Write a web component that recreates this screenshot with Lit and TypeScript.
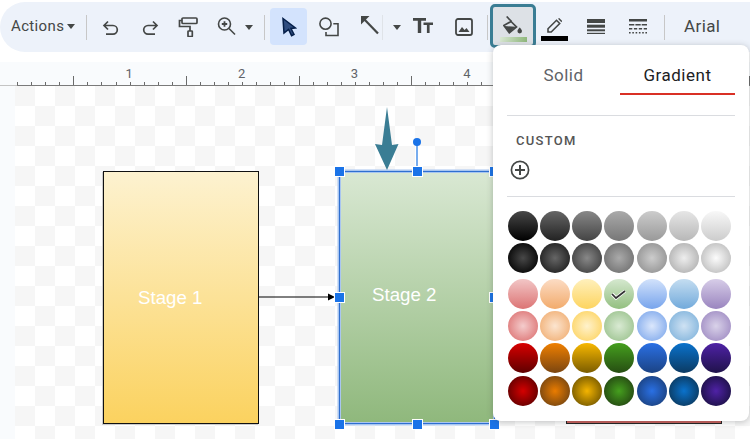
import { LitElement, html, css, svg } from "lit";
import { customElement } from "lit/decorators.js";

const LIN: [string, string][][] = [
  [["#484848","#000000"],["#666666","#222222"],["#888888","#444444"],["#aaaaaa","#777777"],["#cccccc","#999999"],["#e6e6e6","#b7b7b7"],["#f8f8f8","#cccccc"]],
  [["#f2c6c6","#dc7474"],["#fcdcc4","#f2ab6c"],["#fff0bc","#fdd45f"],["#d5e8cf","#93bf80"],["#d2e2fb","#77a4ec"],["#c4ddf1","#72aadb"],["#d7cde8","#9a85bf"]],
  [["#d80000","#5e0000"],["#f08000","#7a4510"],["#f8b800","#7a5c00"],["#459f1e","#264d12"],["#2a70e4","#1b4384"],["#0a72cc","#0b3a62"],["#4f22a6","#1f124a"]],
];
const RAD: [string, string][][] = [
  [["#484848","#0a0a0a"],["#666666","#262626"],["#888888","#484848"],["#aaaaaa","#777777"],["#cccccc","#999999"],["#eeeeee","#b7b7b7"],["#fcfcfc","#c4c4c4"]],
  [["#f4cccc","#e08080"],["#fce5d0","#f2b680"],["#fff2cc","#fdd871"],["#d9ead3","#a4c898"],["#dbe7fc","#8db2ee"],["#cfe2f3","#8cbadf"],["#d9d2e9","#a795c8"]],
  [["#d40000","#6a0000"],["#ea7c00","#7f4a10"],["#f4b400","#7f6000"],["#459f1e","#274e13"],["#2a70e4","#1c4587"],["#0a72cc","#0b3d66"],["#4f22a6","#20124d"]],
];

const HANDLES = [[324.5,85.5],[402,85.5],[479.5,85.5],[324.5,211],[479.5,211],[324.5,338],[402,338],[479.5,338]];

@customElement("app-root")
export class AppRoot extends LitElement {
  static styles = css`
    :host { display: block; width: 750px; height: 439px; overflow: hidden; background: #fff; position: relative; font-family: Roboto, "Liberation Sans", sans-serif; color: #444746; }
    .toolbar { box-sizing: border-box; margin-top: 2px; height: 50px; width: 750px; background: #edf2fa; border-radius: 25px 0 0 25px; display: flex; align-items: center; padding-left: 11px; }
    .toolbar > * { flex: none; }
    .actions { font-size: 15px; letter-spacing: .35px; width: 52px; margin-bottom: 2px; white-space: nowrap; }
    .caret { width: 0; height: 0; border: 4.5px solid transparent; border-top: 5px solid #444746; border-bottom: 0; }
    .c1 { margin: 0 0 2px 4px; }
    .c2 { margin-left: 8.5px; }
    .c3 { margin-left: 9.5px; }
    .sep { width: 1px; height: 25px; background: #c7c7c7; }
    .s1b { margin-left: 11px; }
    .s2b { margin-left: 11.5px; }
    .s3b { margin-left: 3.5px; background: #dfe3e8; }
    .s4b { margin-left: 14px; }
    .s5b { margin-left: 17px; }
    .undo { margin-left: 15px; }
    .redo { margin-left: 21px; }
    .roller { margin-left: 19px; }
    .zoom { margin: 0 0 2px 18px; }
    .sel { margin-left: 5px; margin-bottom: 1px; width: 37px; height: 37px; border-radius: 4px; background: #d3e3fd; display: flex; align-items: center; justify-content: center; }
    .shp { margin: 0 0 1px 11px; }
    .ln { margin: 0 0 4px 19.5px; }
    .tt { margin: 0 0 3px 12.5px; }
    .img { margin-left: 22px; }
    .fill { margin: 0 0 3px 2px; box-sizing: border-box; width: 46px; height: 44px; border: 3px solid #3a7d94; border-radius: 5px; background: #dde1e6; display: flex; flex-direction: column; align-items: center; padding-top: 9px; }
    .fillbar { width: 27px; height: 5px; margin-top: 3px; background: linear-gradient(90deg, #d9e8d3, #8fb87c); }
    .pen { margin: 5px 0 0 5px; width: 27px; display: flex; flex-direction: column; align-items: center; }
    .penbar { width: 27px; height: 5px; margin-top: 3px; background: #000; }
    .weight { margin-left: 19px; }
    .dash { margin-left: 24px; }
    .arial { margin: 0 0 2px 19px; font-size: 17px; letter-spacing: .4px; }
    .rulerwrap { margin-top: 10px; height: 377px; background: #f9fbfd; }
    .ruler { display: block; }
    .canvas { position: absolute; left: 15px; top: 86px; width: 735px; height: 353px; background-color: #fff; background-image: conic-gradient(#fff 25%, #f6f6f6 0 50%, #fff 0 75%, #f6f6f6 0); background-size: 40px 40px; }
    .shape { position: absolute; box-sizing: border-box; color: #fff; font: 18.7px "Liberation Sans", sans-serif; }
    .st1 { left: 88px; top: 85px; width: 156px; height: 253px; border: 1px solid #111; background: linear-gradient(#fdf2d0, #fbd25f); box-shadow: -1px 1px 0 #ccc; }
    .st2 { left: 324px; top: 85px; width: 156px; height: 253px; border: 1px solid #2f6fd0; background: linear-gradient(#d9e8d3, #8fb87c); box-shadow: 0 0 0 1.5px #a9c6f0, inset 0 0 0 1px #a9c6f0; }
    .st3 { left: 551px; top: 300px; width: 156px; height: 38px; border: 1px solid #222; background: #c9605c; }
    .label { position: absolute; white-space: nowrap; }
    .l1 { left: 34px; top: 115px; }
    .l2 { left: 32px; top: 112px; }
    .over { position: absolute; left: 0; top: 0; overflow: visible; }
    .h { position: absolute; box-sizing: border-box; width: 11px; height: 11px; background: #1a73e8; border: 1px solid #fff; margin: -5.5px 0 0 -5.5px; }
    .pop { position: absolute; left: 493px; top: 45px; box-sizing: border-box; width: 256px; height: 376px; background: #fff; border-radius: 8px; box-shadow: 0 1px 6px rgba(60,64,67,.3); padding: 0 14px; }
    .tabs { display: grid; grid-template-columns: 113px 115px; height: 50px; }
    .tab { box-sizing: border-box; height: 50px; padding-top: 10px; display: flex; align-items: center; justify-content: center; font-size: 17px; letter-spacing: .5px; color: #5f6368; }
    .tab.on { color: #202124; border-bottom: 2px solid #d93025; padding-top: 12px; }
    .div { height: 1px; background: #dadce0; width: 228px; }
    .d1 { margin-top: 20px; }
    .custom { font-size: 13px; font-weight: 500; letter-spacing: 1.3px; color: #555; margin: 17px 0 0 9px; line-height: 15px; }
    .plus { display: block; margin: 12px 0 16px 3px; }
    .grid { display: grid; grid-template-columns: repeat(7, 32.17px); grid-auto-rows: 32.2px; margin-top: 13px; }
    .grid.g2 { margin-top: 3.6px; }
    .sw { width: 30px; height: 30px; border-radius: 50%; margin: 1px; display: flex; align-items: center; justify-content: center; }
  `;

  ruler() {
    const t = [];
    const inch = 112.6, x0 = 17;
    for (let i = 0; i < 53; i++) {
      const x = Math.round(x0 + (i * inch) / 8) + 0.5;
      if (x > 750) break;
      const h = i % 8 === 4 ? 9 : 3;
      t.push(svg`<line x1=${x} x2=${x} y1=${23 - h} y2="23" stroke="#6b6b6b"/>`);
    }
    const n = [1, 2, 3, 4].map(v => svg`<text x=${x0 + v * inch - 0.5} y="15.500" text-anchor="middle" font-family="Roboto, sans-serif" font-size="13" fill="#5f6368">${v}</text>`);
    return html`<svg class="ruler" viewBox="0 0 750 24" width="750" height="24">${t}${n}
      <line x1="0" x2="17" y1="23.500" y2="23.500" stroke="#c4c4c4"/>
      <line x1="17" x2="750" y1="23.500" y2="23.500" stroke="#7a7a7a"/></svg>`;
  }

  swatches(rows: [string, string][][], kind: string, i: number) {
    return rows[i].map(([a, b], j) => {
      const g = kind === "l" ? `linear-gradient(${a}, ${b})` : `radial-gradient(circle closest-side, ${a}, ${b} 105%)`;
      const check = i === 1 && kind === "l" && j === 3;
      return html`<div class="sw" style="background:${g}">${check
        ? html`<svg width="18" height="16" viewBox="0 0 18 16" fill="none"><path d="M2 8l4 4 9-7" stroke="#fff" stroke-width="3.400"/><path d="M2 8l4 4 9-7" stroke="#333" stroke-width="1.700"/></svg>`
        : ""}</div>`;
    });
  }

  render() {
    const s = "#444746";
    return html`
      <div class="toolbar">
        <span class="actions">Actions</span>
        <span class="caret c1"></span>
        <span class="sep s1b"></span>
        <svg class="undo" width="18" height="18" viewBox="0 0 18 18" fill="none" stroke=${s} stroke-width="1.700"><path d="M6 3.500L2 7.500l4 4M2 7.500h9a4.300 4.300 0 0 1 0 8.600H4"/></svg>
        <svg class="redo" width="18" height="18" viewBox="0 0 18 18" fill="none" stroke=${s} stroke-width="1.700"><path d="M12 3.500l4 4-4 4M16 7.500H7a4.300 4.300 0 0 0 0 8.600h7"/></svg>
        <svg class="roller" width="20" height="20" viewBox="0 0 20 20" fill="none" stroke=${s} stroke-width="1.700"><rect x="4" y="1" width="15" height="5.500" rx="1"/><path d="M4 3.500H1.500V9.500H12V14"/><rect x="10" y="14" width="4.300" height="5.500" rx=".6"/></svg>
        <svg class="zoom" width="20" height="20" viewBox="0 0 20 20" fill="none" stroke=${s} stroke-width="1.600"><circle cx="8.500" cy="8" r="6"/><path d="M13 12.500l6 6"/><path d="M5.800 8h5.400M8.500 5.300v5.400" stroke-width="1.800"/></svg>
        <span class="caret c2"></span>
        <span class="sep s2b"></span>
        <span class="sel"><svg width="16" height="21" viewBox="0 0 16 21"><path d="M2 2.500L14.500 12l-4.500.5 3 6-2.400 1.200-3-6.200-4.600 3.500z" fill="#2f4d80" stroke="#041e49" stroke-width="1.500"/></svg></span>
        <svg class="shp" width="21" height="21" viewBox="0 0 21 21" fill="none" stroke=${s} stroke-width="1.600"><circle cx="7.500" cy="7.700" r="5.600"/><path d="M15.300 7.700H20V19.500H8V16"/></svg>
        <svg class="ln" width="20" height="20" viewBox="0 0 20 20"><path d="M2 1h8.500L2 9.500z" fill=${s}/><path d="M4 3L19 18.500" stroke=${s} stroke-width="2.200" fill="none"/></svg>
        <span class="sep s3b"></span>
        <span class="caret c3"></span>
        <svg class="tt" width="20" height="15" viewBox="0 0 20 15" fill=${s}><path d="M0 0h13v2.800H8.200V15H4.800V2.800H0zM10.500 4.500H20v2.400h-3.400V15h-2.700V6.900h-3.400z"/></svg>
        <svg class="img" width="18" height="18" viewBox="0 0 18 18"><rect x="1" y="1" width="16" height="16" rx="2" fill="none" stroke=${s} stroke-width="1.800"/><path d="M3.500 14l3.500-5 2.600 3 1.900-2 3 4z" fill=${s}/></svg>
        <span class="sep s4b"></span>
        <span class="fill">
          <svg width="20" height="18" viewBox="0 0 20 18"><path d="M8 5.500L13.500 11 6.300 16.800.8 9.500z" fill="none" stroke=${s} stroke-width="1.700"/><path d="M1.500 10L13 10.800 6.300 16.500z" fill=${s}/><path d="M3.700.5L8.500 5.500" stroke=${s} stroke-width="1.700"/><path d="M16.700 11.500s2.300 2.200 2.300 3.600a2.300 2.300 0 0 1-4.600 0c0-1.400 2.300-3.600 2.300-3.600z" fill=${s}/></svg>
          <span class="fillbar"></span>
        </span>
        <span class="pen">
          <svg width="15" height="15" viewBox="0 0 15 15"><path d="M1 14V10.800L9.500 2.300l3.200 3.200L4.200 14z" fill="none" stroke=${s} stroke-width="1.600"/><path d="M11 .8l1.200-.8 3 3-.8 1.200z" fill=${s}/></svg>
          <span class="penbar"></span>
        </span>
        <svg class="weight" width="18" height="16" viewBox="0 0 18 16" fill=${s}><rect width="18" height="4"/><rect y="5.700" width="18" height="3"/><rect y="10.300" width="18" height="2"/><rect y="13.800" width="18" height="1.200"/></svg>
        <svg class="dash" width="18" height="16" viewBox="0 0 18 16" fill=${s}><rect width="18" height="2.500"/><path d="M0 5h5.300v1.500H0zM6.400 5h5.300v1.500H6.400zM12.700 5H18v1.500h-5.300zM0 9h3.300v1.500H0zM4.900 9h3.300v1.500H4.900zM9.800 9h3.300v1.500H9.800zM14.700 9H18v1.500h-3.300zM0 13h1.600v1.500H0zM3.300 13h1.600v1.500H3.300zM6.600 13h1.600v1.500H6.600zM9.900 13h1.600v1.500H9.900zM13.200 13h1.600v1.500h-1.600zM16.400 13H18v1.500h-1.600z"/></svg>
        <span class="sep s5b"></span>
        <span class="arial">Arial</span>
      </div>
      <div class="rulerwrap">${this.ruler()}</div>
      <div class="canvas">
        <div class="shape st1"><span class="label l1">Stage 1</span></div>
        <div class="shape st2"><span class="label l2">Stage 2</span></div>
        <div class="shape st3"></div>
        <svg class="over" width="735" height="353" viewBox="15 86 735 353">
          <line x1="259" x2="332" y1="297" y2="297" stroke="#000" stroke-width="1"/>
          <path d="M328 293.500l7 3.500-7 3.500z" fill="#000"/>
          <path d="M387 107l5 38 6.500-1L387 170l-12-26 7 1z" fill="#3a7d94"/>
          <line x1="417" x2="417" y1="142" y2="171" stroke="#4a90e8" stroke-width="1.500"/>
          <circle cx="417" cy="142" r="4" fill="#1a73e8"/>
        </svg>
        ${HANDLES.map(([x, y]) => html`<span class="h" style="left:${x}px;top:${y}px"></span>`)}
      </div>
      <div class="pop">
        <div class="tabs">
          <div class="tab">Solid</div>
          <div class="tab on">Gradient</div>
        </div>
        <div class="div d1"></div>
        <div class="custom">CUSTOM</div>
        <svg class="plus" width="20" height="20" viewBox="0 0 20 20" fill="none" stroke="#444746" stroke-width="1.700"><circle cx="10" cy="10" r="8.600"/><path d="M5 10h10M10 5v10" stroke-width="2"/></svg>
        <div class="div"></div>
        <div class="grid">${this.swatches(LIN,"l",0)}${this.swatches(RAD,"r",0)}</div>
        <div class="grid g2">${this.swatches(LIN,"l",1)}${this.swatches(RAD,"r",1)}${this.swatches(LIN,"l",2)}${this.swatches(RAD,"r",2)}</div>
      </div>
    `;
  }
}
